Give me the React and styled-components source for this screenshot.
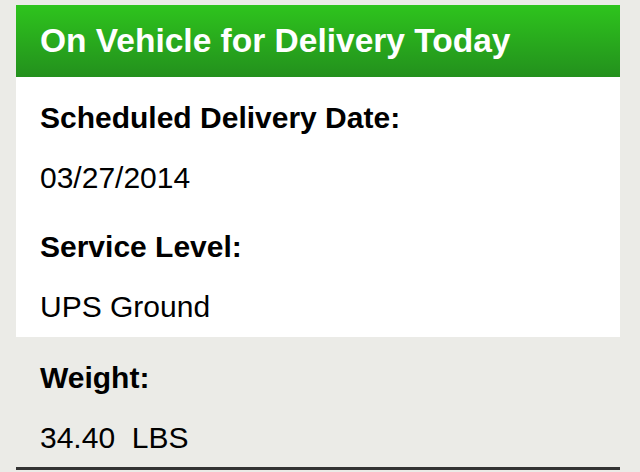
import React from 'react'
import styled, { createGlobalStyle } from 'styled-components'

const GlobalStyle = createGlobalStyle`
    html, body {
        margin: 0;
        padding: 0;
        background: #ebebe7;
    }
    body {
        font-family: "Liberation Sans", Arial, sans-serif;
        color: #000;
    }
`

const details = [
    {label: 'Scheduled Delivery Date:', value: '03/27/2014'},
    {label: 'Service Level:', value: 'UPS Ground'},
]

export default function App() {
    return (
        <>
            <GlobalStyle />
            <Page>
                <Card>
                    <StatusHeader>On Vehicle for Delivery Today</StatusHeader>
                    <Section $white>
                        {details.map(d => (
                            <Item key={d.label}>
                                <Label>{d.label}</Label>
                                <Value>{d.value}</Value>
                            </Item>
                        ))}
                    </Section>
                    <Section>
                        <Item>
                            <Label>Weight:</Label>
                            <Value>34.40&nbsp; LBS</Value>
                        </Item>
                    </Section>
                </Card>
            </Page>
        </>
    )
}

const Page = styled.div`
    width: 640px;
    height: 472px;
    overflow: hidden;
    padding: 5px 20px 0 16px;
    box-sizing: border-box;
`

const Card = styled.div`
    display: flex;
    flex-direction: column;
    border-bottom: 3px solid #333;
`

const StatusHeader = styled.div`
    height: 72px;
    display: flex;
    align-items: center;
    padding: 0 24px;
    background: linear-gradient(to bottom, #2ec41d, #23901d);
    color: #fff;
    font-weight: bold;
    font-size: 33.5px;
`

const Section = styled.div`
    display: flex;
    flex-direction: column;
    gap: 39px;
    padding: ${p => p.$white ? '26px 24px 15px' : '26px 24px 14px'};
    background: ${p => p.$white ? '#fff' : 'transparent'};
`

const Item = styled.div`
    display: flex;
    flex-direction: column;
    gap: 30px;
`

const Label = styled.div`
    font-weight: bold;
    font-size: 30px;
    line-height: 30px;
`

const Value = styled.div`
    font-size: 30px;
    line-height: 30px;
`
